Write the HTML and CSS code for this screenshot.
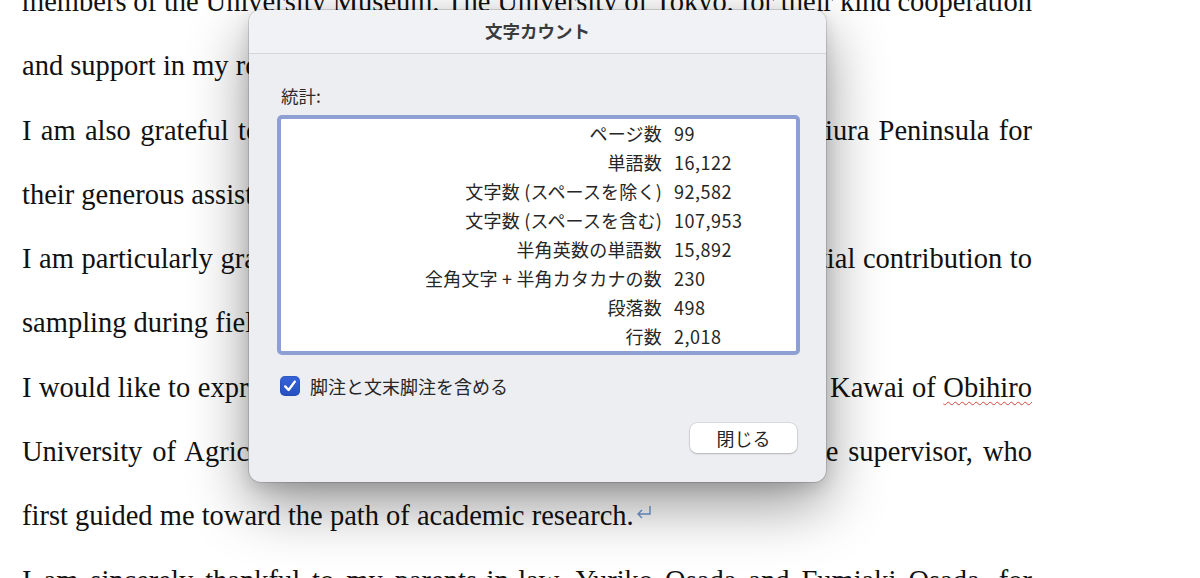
FILE: index.html
```html
<!DOCTYPE html>
<html lang="ja">
<head>
<meta charset="utf-8">
<title>文字カウント</title>
<link rel="stylesheet" href="styles.css">
</head>
<body>
<div class="doc">
  <p class="para">
    <span class="ln tight">members of the University Museum, The University of Tokyo, for their kind cooperation</span>
    <span class="ln last">and support in my research.<svg class="pm" viewBox="0 0 16 14" width="16" height="14"><path d="M14 1 V9 H2 M6 5 L2 9 L6 13" fill="none" stroke="#6c98d8" stroke-width="1.4"/></svg></span>
  </p>
  <p class="para">
    <span class="ln">I am also grateful to all the local fishermen of Misaki Port on the Miura Peninsula for</span>
    <span class="ln last">their generous assistance.<svg class="pm" viewBox="0 0 16 14" width="16" height="14"><path d="M14 1 V9 H2 M6 5 L2 9 L6 13" fill="none" stroke="#6c98d8" stroke-width="1.4"/></svg></span>
  </p>
  <p class="para">
    <span class="ln">I am particularly grateful to Dr. Takayuki Yamanouchi for his substantial contribution to</span>
    <span class="ln last">sampling during fieldwork.<svg class="pm" viewBox="0 0 16 14" width="16" height="14"><path d="M14 1 V9 H2 M6 5 L2 9 L6 13" fill="none" stroke="#6c98d8" stroke-width="1.4"/></svg></span>
  </p>
  <p class="para">
    <span class="ln">I would like to express my most sincere gratitude to Professor Yusuke Kawai of <span class="spell">Obihiro</span></span>
    <span class="ln">University of Agriculture and Veterinary Medicine, my undergraduate supervisor, who</span>
    <span class="ln last">first guided me toward the path of academic research.<svg class="pm" viewBox="0 0 16 14" width="16" height="14"><path d="M14 1 V9 H2 M6 5 L2 9 L6 13" fill="none" stroke="#6c98d8" stroke-width="1.4"/></svg></span>
  </p>
  <p class="para">
    <span class="ln">I am sincerely thankful to my parents-in-law, Yuriko Osada and Fumiaki Osada, for</span>
  </p>
</div>

<div class="dialog">
  <div class="titlebar">文字カウント</div>
  <div class="dbody">
    <div class="label">統計:</div>
    <div class="stats">
      <div class="row"><span class="k">ページ数</span><span class="v">99</span></div>
      <div class="row"><span class="k">単語数</span><span class="v">16,122</span></div>
      <div class="row"><span class="k">文字数 (スペースを除く)</span><span class="v">92,582</span></div>
      <div class="row"><span class="k">文字数 (スペースを含む)</span><span class="v">107,953</span></div>
      <div class="row"><span class="k">半角英数の単語数</span><span class="v">15,892</span></div>
      <div class="row"><span class="k">全角文字 + 半角カタカナの数</span><span class="v">230</span></div>
      <div class="row"><span class="k">段落数</span><span class="v">498</span></div>
      <div class="row"><span class="k">行数</span><span class="v">2,018</span></div>
    </div>
    <label class="check">
      <span class="cbox"><svg viewBox="0 0 20 20" width="20" height="20"><path d="M5.2 10.4 L8.6 14 L14.8 5.6" fill="none" stroke="#fff" stroke-width="2.4" stroke-linecap="round" stroke-linejoin="round"/></svg></span>
      <span class="ctext">脚注と文末脚注を含める</span>
    </label>
    <div class="actions">
      <button class="btn">閉じる</button>
    </div>
  </div>
</div>
</body>
</html>
```

FILE: styles.css
```css
html, body {
  margin: 0;
  padding: 0;
  background: #ffffff;
  width: 1200px;
  height: 578px;
  overflow: hidden;
}

.doc {
  margin-top: -30px;
  padding-left: 22px;
  width: 1010px;
  font-family: "Liberation Serif", "Times New Roman", serif;
  font-size: 28.5px;
  line-height: 64.3px;
  color: #111;
}

.para {
  margin: 0;
}

.ln {
  display: block;
  text-align: justify;
  text-align-last: justify;
  white-space: nowrap;
}

.ln.tight {
  word-spacing: -0.6px;
}

.ln.last {
  text-align-last: left;
}

.pm {
  display: inline-block;
  vertical-align: baseline;
  margin-left: 2px;
  position: relative;
  top: -6px;
}

.spell {
  text-decoration: underline wavy #d0453a;
  text-decoration-thickness: 1px;
  text-underline-offset: 4px;
}

.dialog {
  position: absolute;
  left: 249px;
  top: 10px;
  width: 577px;
  background: #edeef1;
  border-radius: 12px;
  box-shadow: 0 0 0 1px rgba(0, 0, 0, 0.13), 0 22px 60px rgba(0, 0, 0, 0.42), 0 6px 16px rgba(0, 0, 0, 0.12);
  font-family: "Noto Sans CJK JP", "Noto Sans", sans-serif;
  color: #262626;
  overflow: hidden;
}

.titlebar {
  height: 43px;
  line-height: 41px;
  text-align: center;
  font-size: 17.5px;
  font-weight: 700;
  color: #3b3b3d;
  background: #f1f2f5;
  border-bottom: 1px solid #d6d6d9;
}

.dbody {
  padding: 30px 26px 29px 28px;
}

.label {
  font-size: 17.5px;
  line-height: 24px;
  padding-left: 4px;
  color: #2a2a2a;
}

.stats {
  margin-top: 7px;
  height: 232px;
  background: #fff;
  border: 4px solid #8e9fd3;
  border-radius: 5px;
  display: flex;
  flex-direction: column;
}

.row {
  display: grid;
  grid-template-columns: 381px 1fr;
  column-gap: 12px;
  height: 29px;
  line-height: 29px;
  font-size: 18px;
  letter-spacing: 0.2px;
  color: #262626;
}

.row .k {
  text-align: right;
}

.row .v {
  text-align: left;
  letter-spacing: 0.5px;
}

.check {
  margin-top: 21px;
  display: flex;
  align-items: center;
  gap: 10px;
  padding-left: 3px;
  height: 20px;
}

.cbox {
  width: 20px;
  height: 20px;
  border-radius: 5px;
  background: linear-gradient(#3563d6, #2650c2);
  box-shadow: inset 0 0 0 1px rgba(0, 0, 0, 0.08);
  display: flex;
}

.ctext {
  font-size: 18px;
  line-height: 20px;
  color: #262626;
}

.actions {
  margin-top: 27px;
  display: flex;
  justify-content: flex-end;
  padding-right: 3px;
}

.btn {
  width: 107px;
  height: 30px;
  border: none;
  border-radius: 7px;
  background: #ffffff;
  box-shadow: 0 0 0 0.5px rgba(0, 0, 0, 0.16), 0 1px 2px rgba(0, 0, 0, 0.18);
  font-family: "Noto Sans CJK JP", "Noto Sans", sans-serif;
  font-size: 18px;
  color: #262626;
  padding: 0;
  line-height: 30px;
}
```
